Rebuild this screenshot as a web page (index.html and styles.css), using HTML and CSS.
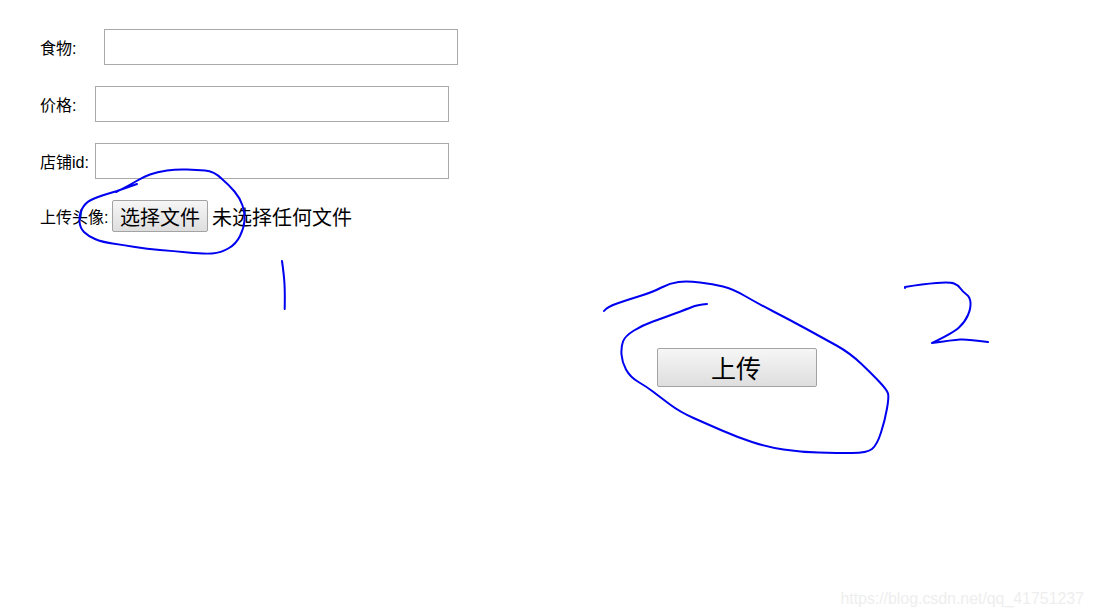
FILE: index.html
```html
<!DOCTYPE html>
<html lang="en">
<head>
    <meta charset="UTF-8">
    <meta name="viewport" content="width=device-width, initial-scale=1.0">
    <title>上传</title>
    <link rel="stylesheet" href="styles.css">
</head>
<body>

<form class="upload-form">
    <div class="row">
        <label class="label label-wide">食物:</label>
        <input type="text" class="field">
    </div>
    <div class="row">
        <label class="label">价格:</label>
        <input type="text" class="field">
    </div>
    <div class="row">
        <label class="label">店铺id:</label>
        <input type="text" class="field">
    </div>
    <div class="row file-row">
        <label class="label label-file">上传头像:</label>
        <button type="button" class="file-button">选择文件</button>
        <span class="file-name">未选择任何文件</span>
    </div>
    <button type="button" class="submit-button">上传</button>
</form>

<!-- pen marks drawn over the screenshot -->
<svg class="marks" width="1093" height="616" viewBox="0 0 1093 616" fill="none" stroke="#0000f0" stroke-width="2" stroke-linecap="round" stroke-linejoin="round">
    <path d="M137 184 L117 191 Q117 191 107 194 Q97 197 91 200 Q85 203 82 209 Q79 215 79.500 221.500 Q80 228 84 232 Q88 236 95 239 Q102 242 112.500 243.500 Q123 245 135 247 Q147 249 160 250 Q173 251 188 252.500 Q203 254 212 253.500 Q221 253 229 248 Q236 244 240 236 Q244 228 244.500 220.500 Q245 213 242.500 205.500 Q240 198 234.500 191.500 Q229 185 222 179 Q214 171 205 170.500 Q197 170 187 169.500 Q177 169 167 170.500 Q157 172 150 174.500 Q143 177 136.500 181 Q130 185 116 192"/>
    <path d="M282 261 Q284 275 284.500 284 Q285 293 284.700 309"/>
    <path d="M604 311 Q607 307 617 303.500 Q627 300 640 296 Q653 292 661.500 287.500 Q670 283 678.500 282 Q687 281 700 282.500 Q713 284 723 286.500 Q733 289 745 296 Q757 303 773.500 311.500 Q790 320 806.500 329 Q823 338 836.500 345.500 Q850 353 861.500 364 Q873 375 880 382.500 Q887 390 888 393.500 Q889 397 887 408.500 Q885 420 881 432.500 Q877 445 872 449 Q867 453 852 453 Q837 453 818.500 452.500 Q800 452 783.500 449.500 Q767 447 752 442 Q737 437 722 430.500 Q707 424 693.500 418 Q680 412 670 404.500 Q660 397 653.500 392 Q647 387 638.500 382 Q630 377 626 369.500 Q622 362 621.500 354.500 Q621 347 623 341.500 Q625 336 634 330.500 Q643 325 653 321.500 Q663 318 675 313.500 Q687 309 692 307 Q697 305 707 304"/>
    <path d="M905 288 L905 287 Q923 284 936.500 283 Q950 282 954 283.500 Q958 285 960.500 288.500 Q963 292 966.500 294.500 Q970 297 970.500 302.500 Q971 308 968 315 Q965 322 959 327.500 Q953 333 932 343 Q953 340 960 339.500 Q967 339 988 342"/>
</svg>

<div class="watermark">https://blog.csdn.net/qq_41751237</div>

</body>
</html>
```

FILE: styles.css
```css
body {
    margin: 0;
    padding: 29px 40px 0;
    height: 616px;
    box-sizing: border-box;
    overflow: hidden;
    position: relative;
    background-color: white;
    color: black;
    font-family: "Liberation Sans", "Noto Sans CJK SC", sans-serif;
    font-size: 16px;
}

.row {
    display: flex;
    align-items: center;
    margin-bottom: 21px;
}

.label {
    width: 55px;
    flex-shrink: 0;
    white-space: nowrap;
}

.label-wide {
    width: 64px;
}

.label-file {
    width: 72px;
}

.field {
    width: 354px;
    height: 36px;
    padding: 0 6px;
    border: 1px solid #a9a9a9;
    box-sizing: border-box;
    background-color: white;
}

.file-row {
    margin-bottom: 0;
}

.file-button {
    width: 96px;
    height: 32px;
    padding: 0;
    border: 1px solid #a3a3a3;
    border-radius: 2px;
    background: linear-gradient(#f6f6f6, #dedede);
    font-family: inherit;
    font-size: 20px;
    color: black;
}

.file-name {
    margin-left: 4px;
    font-size: 20px;
}

.submit-button {
    display: block;
    width: 160px;
    height: 39px;
    margin: 116px 0 0 617px;
    padding: 0 2px 2px 0;
    border: 1px solid #a3a3a3;
    border-radius: 2px;
    background: linear-gradient(#f6f6f6, #dedede);
    font-family: inherit;
    font-size: 25px;
    color: black;
}

.marks {
    position: absolute;
    left: 0;
    top: 0;
    pointer-events: none;
}

.watermark {
    position: absolute;
    right: 9px;
    bottom: 8px;
    color: #eeeeee;
    font-size: 16px;
    letter-spacing: -0.06px;
}
```
